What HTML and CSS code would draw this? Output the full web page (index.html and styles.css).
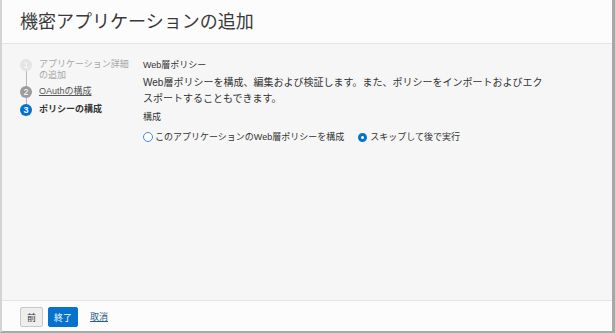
FILE: index.html
```html
<!DOCTYPE html>
<html lang="ja">
<head>
    <meta charset="UTF-8">
    <title>機密アプリケーションの追加</title>
    <link rel="stylesheet" href="styles.css">
</head>
<body>
    <div class="dialog">
        <div class="header">
            <h1>機密アプリケーションの追加</h1>
        </div>

        <div class="content">
            <div class="train">
                <div class="step done">
                    <div class="marker"><span class="dot">1</span><span class="tail"></span></div>
                    <div class="label">アプリケーション詳細の追加</div>
                </div>
                <div class="step visited">
                    <div class="marker"><span class="dot">2</span><span class="tail"></span></div>
                    <div class="label"><a href="#">OAuthの構成</a></div>
                </div>
                <div class="step current">
                    <div class="marker"><span class="dot">3</span></div>
                    <div class="label">ポリシーの構成</div>
                </div>
            </div>

            <div class="panel">
                <div class="title">Web層ポリシー</div>
                <p class="desc">Web層ポリシーを構成、編集および検証します。また、ポリシーをインポートおよびエクスポートすることもできます。</p>
                <div class="field-label">構成</div>
                <div class="radios">
                    <label class="radio"><span class="ring focus"></span>このアプリケーションのWeb層ポリシーを構成</label>
                    <label class="radio"><span class="ring checked"></span>スキップして後で実行</label>
                </div>
            </div>
        </div>

        <div class="footer">
            <button class="btn">前</button>
            <button class="btn primary">終了</button>
            <a class="cancel" href="#">取消</a>
        </div>
    </div>
</body>
</html>
```

FILE: styles.css
```css
body {
    margin: 0;
    background-color: #ffffff;
    font-family: 'Liberation Sans', 'Noto Sans CJK JP', sans-serif;
    color: #333333;
}
.dialog {
    box-sizing: border-box;
    width: 615px;
    height: 333px;
    display: flex;
    flex-direction: column;
    border-left: 2px solid #d4d4d4;
    border-right: 3px solid #a8a8a8;
    border-bottom: 2px solid #a8a8a8;
    background-color: #fcfcfc;
}
.header {
    height: 43px;
    display: flex;
    align-items: center;
    padding-left: 18px;
    border-bottom: 1px solid #e4e4e4;
}
.header h1 {
    margin: 0;
    font-size: 18px;
    font-weight: normal;
    line-height: 20px;
    color: #3a3a3a;
}
.content {
    flex: 1;
    display: flex;
    padding: 15px 0 0 18px;
    background-color: #f6f6f6;
}
.train {
    width: 123px;
    flex-shrink: 0;
}
.step {
    display: flex;
    gap: 7px;
    font-size: 9px;
    line-height: 11px;
}
.step.done {
    padding-bottom: 5px;
}
.step.visited {
    padding-bottom: 7px;
}
.marker {
    display: flex;
    flex-direction: column;
    align-items: center;
    margin-top: -0.5px;
    margin-bottom: -12px;
}
.step.current .marker {
    margin-bottom: 0;
}
.dot {
    width: 12px;
    height: 12px;
    border-radius: 50%;
    font-size: 9px;
    line-height: 12px;
    text-align: center;
    color: #ffffff;
    flex-shrink: 0;
}
.tail {
    flex: 1;
    width: 1px;
    background-color: #b8b8b8;
}
.label {
    width: 95px;
}
.step.done .dot {
    background-color: #e4e4e4;
    color: #fafafa;
}
.step.done .label {
    color: #a6a6a6;
}
.step.visited .dot {
    background-color: #9c9c9c;
}
.step.visited .label a {
    color: #555555;
}
.step.current .dot {
    background-color: #0572ce;
    font-weight: bold;
}
.step.current .label {
    font-weight: bold;
    color: #333333;
}
.panel {
    flex: 1;
}
.title {
    font-size: 9px;
    line-height: 12px;
}
.desc {
    margin: 4px 0 0;
    max-width: 406px;
    font-size: 10px;
    line-height: 16px;
}
.field-label {
    margin-top: 4px;
    font-size: 9px;
    line-height: 12px;
}
.radios {
    display: flex;
    gap: 14px;
    margin-top: 8px;
    font-size: 9px;
    line-height: 12px;
}
.radio {
    display: flex;
    align-items: center;
    gap: 2px;
}
.ring {
    box-sizing: border-box;
    width: 10px;
    height: 10px;
    border-radius: 50%;
    background-color: #ffffff;
}
.ring.focus {
    border: 1.5px solid #3d8fd9;
}
.ring.checked {
    width: 9px;
    height: 9px;
    border: 3px solid #0572ce;
    margin-right: 1px;
}
.footer {
    height: 31px;
    box-sizing: border-box;
    display: flex;
    align-items: flex-start;
    padding: 6px 18px 0;
    border-top: 1px solid #e4e4e4;
    background-color: #fcfcfc;
}
.btn {
    height: 20px;
    padding: 0 6px;
    font-family: inherit;
    font-size: 9px;
    color: #333333;
    background-color: #eeeeee;
    border: 1px solid #c8c8c8;
    border-radius: 2px;
}
.btn.primary {
    margin-left: 5px;
    padding: 0 5px;
    color: #ffffff;
    background-color: #0572ce;
    border-color: #0572ce;
}
.cancel {
    margin-left: 12px;
    font-size: 9px;
    line-height: 20px;
    color: #2a5a86;
}
```
